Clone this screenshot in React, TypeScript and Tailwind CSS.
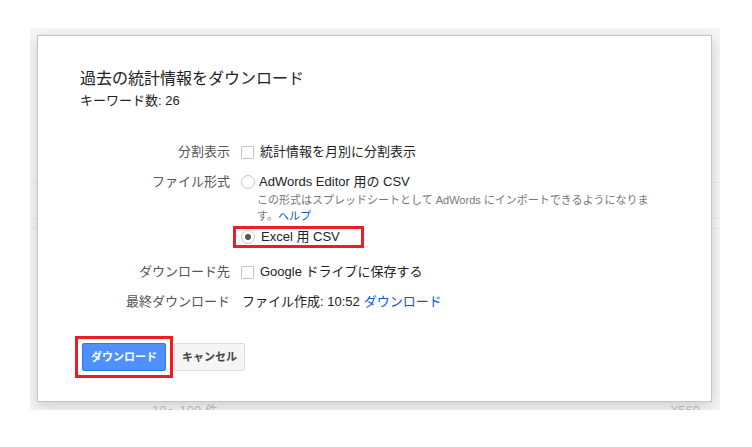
const font = {
  fontFamily: '"Liberation Sans", Arial, "Noto Sans CJK JP", sans-serif',
};

function Checkbox() {
  return (
    <span className="inline-block w-[13px] h-[13px] border border-[#c6c6c6] rounded-[1px] bg-white shrink-0" />
  );
}

function Radio({ checked }: { checked?: boolean }) {
  return (
    <span className="inline-flex items-center justify-center w-[14px] h-[14px] rounded-full border border-[#c6c6c6] bg-white shrink-0">
      {checked && <span className="block w-[6px] h-[6px] rounded-full bg-[#555]" />}
    </span>
  );
}

function Row({ label, children, className = "" }: { label: string; children: React.ReactNode; className?: string }) {
  return (
    <div className={`flex items-center h-5 ${className}`}>
      <div className="w-[150px] text-right text-[#555] shrink-0">{label}</div>
      <div className="ml-[11px] flex items-center text-[#222]">{children}</div>
    </div>
  );
}

export default function App() {
  return (
    <div className="w-[752px] h-[447px] bg-white overflow-hidden pt-[28px] pl-[30px]" style={font}>
      <div className="relative w-[690px] h-[382px] bg-[#f7f7f6] overflow-hidden">
        {/* faded page behind the dialog */}
        <div className="absolute left-0 right-0 top-[154px] h-px bg-[#ececec]" />
        <div className="absolute left-0 right-0 top-[190px] h-px bg-[#ececec]" />
        <div className="absolute left-0 right-0 top-[200px] h-px bg-[#ececec]" />
        <div className="absolute left-[122px] top-[373px] text-[13px] text-[#c4c4c4]">10～100 件</div>
        <div className="absolute left-[641px] top-[373px] text-[13px] text-[#c4c4c4]">¥569</div>

        <div className="relative ml-[7px] mt-[7px] w-[675px] h-[367px] bg-white border border-[#c4c4c4] shadow-[0_4px_14px_rgba(0,0,0,0.18)] pt-[33px] pl-[42px] text-[13px]">
          <div className="text-[16px] leading-5 text-[#222]">過去の統計情報をダウンロード</div>
          <div className="mt-[3px] leading-[17px] text-[#222]">キーワード数: 26</div>

          <div className="mt-[33px]">
            <Row label="分割表示">
              <Checkbox />
              <span className="ml-[6px]">統計情報を月別に分割表示</span>
            </Row>

            <Row label="ファイル形式" className="mt-[10px]">
              <Radio />
              <span className="ml-[4px]">AdWords Editor 用の CSV</span>
            </Row>
            <div className="ml-[177px] w-[392px] text-[11px] leading-4 text-[#777]">
              この形式はスプレッドシートとして AdWords にインポートできるようになります。
              <span className="text-[#1155cc]">ヘルプ</span>
            </div>
            <div className="ml-[153px] mt-[2px] w-[131px] h-[22px] border-[3px] border-[#ee1c25] flex items-center pl-[5px] text-[#222]">
              <Radio checked />
              <span className="ml-[6px]">Excel 用 CSV</span>
            </div>

            <Row label="ダウンロード先" className="mt-[14px]">
              <Checkbox />
              <span className="ml-[6px]">Google ドライブに保存する</span>
            </Row>

            <Row label="最終ダウンロード" className="mt-[10px]">
              <span className="ml-[1px]">ファイル作成: 10:52 </span>
              <span className="ml-[4px] text-[#1155cc]">ダウンロード</span>
            </Row>
          </div>

          <div className="mt-[24px] -ml-[5px] flex items-start">
            <div className="border-[3px] border-[#ee1c25] p-1">
              <button className="w-[84px] h-[28px] rounded-[2px] border border-[#3079ed] bg-[#4d90fe] text-white text-[11px] font-bold">
                ダウンロード
              </button>
            </div>
            <button className="mt-[7px] ml-px w-[71px] h-[28px] rounded-[2px] border border-[#dcdcdc] bg-[#f5f5f5] text-[#444] text-[11px] font-bold">
              キャンセル
            </button>
          </div>
        </div>
      </div>
    </div>
  );
}
